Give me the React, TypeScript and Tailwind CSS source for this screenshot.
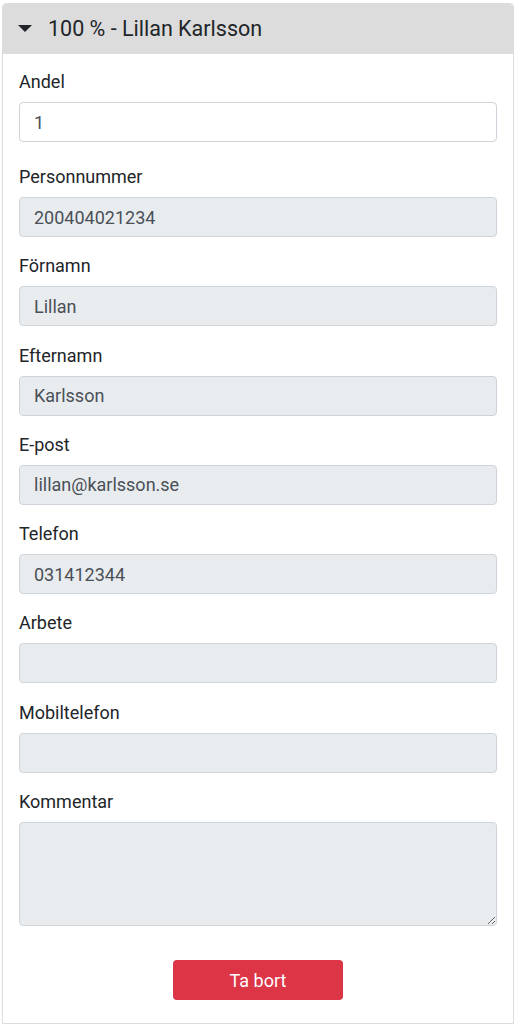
const fields: { label: string; value: string }[] = [
  { label: "Personnummer", value: "200404021234" },
  { label: "Förnamn", value: "Lillan" },
  { label: "Efternamn", value: "Karlsson" },
  { label: "E-post", value: "lillan@karlsson.se" },
  { label: "Telefon", value: "031412344" },
  { label: "Arbete", value: "" },
  { label: "Mobiltelefon", value: "" },
];

export default function App() {
  return (
    <div className="bg-white pl-[2px] pt-[3px] font-['Roboto',sans-serif] text-[#212529]">
      <div className="h-[1021px] w-[512px] rounded-t-[4px] border border-[#dcdcdc]">
        <div className="flex h-[50px] items-center rounded-t-[3px] bg-[#dcdcdc] pl-[15px]">
          <svg width="14" height="8" viewBox="0 0 14 8" className="mr-[16px]">
            <path d="M0 0 H14 L7 7 Z" fill="#212529" />
          </svg>
          <span className="text-[21.5px]">100 % - Lillan Karlsson</span>
        </div>

        <div className="px-[16px] pt-[16px]">
          <div className="mb-[23px]">
            <label className="mb-[8px] block text-[18px] leading-[24px]">Andel</label>
            <input
              defaultValue="1"
              className="block h-[40px] w-full rounded-[4px] border border-[#ced4da] bg-white px-[14px] text-[18px] text-[#495057] outline-none"
            />
          </div>

          {fields.map((f) => (
            <div key={f.label} className="mb-[17.3px]">
              <label className="mb-[8px] block text-[18px] leading-[24px]">{f.label}</label>
              <input
                readOnly
                value={f.value}
                className="block h-[40px] w-full rounded-[4px] border border-[#ced4da] bg-[#e9ecef] px-[14px] text-[18px] text-[#495057] outline-none"
              />
            </div>
          ))}

          <div>
            <label className="mb-[8px] block text-[18px] leading-[24px]">Kommentar</label>
            <textarea
              readOnly
              className="block h-[104px] w-full rounded-[4px] border border-[#ced4da] bg-[#e9ecef] px-[14px] text-[18px] text-[#495057] outline-none"
            />
          </div>

          <div className="mt-[34px] flex justify-center">
            <button className="h-[40px] w-[170px] rounded-[4px] bg-[#dc3545] text-[18px] text-white">
              Ta bort
            </button>
          </div>
        </div>
      </div>
    </div>
  );
}
